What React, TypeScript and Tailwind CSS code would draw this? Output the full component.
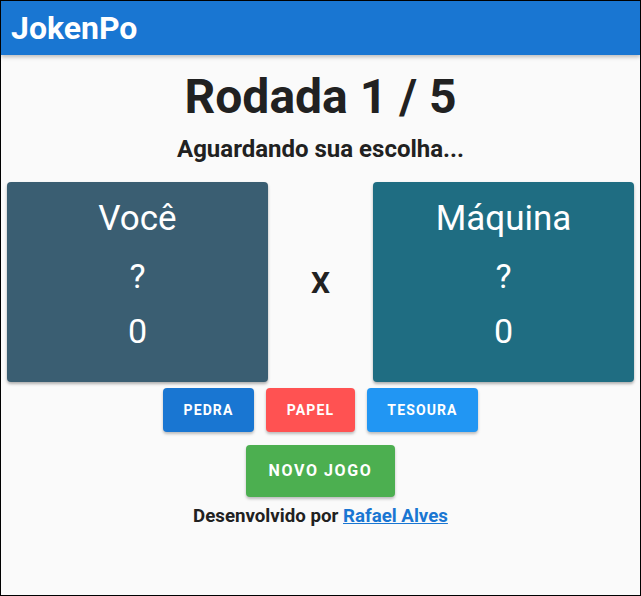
export default function App() {
  const font = { fontFamily: "Roboto, 'Liberation Sans', sans-serif" };
  return (
    <div
      className="w-[641px] h-[596px] border border-black bg-[#fafafa] overflow-hidden flex flex-col"
      style={font}
    >
      <header className="h-[54px] shrink-0 bg-[#1976d2] flex items-center px-[10px] shadow-[0_2px_4px_rgba(0,0,0,0.25)] relative z-10">
        <h1 className="text-white font-bold text-[32px] leading-none">JokenPo</h1>
      </header>
      <main className="flex flex-col items-center px-[6px]">
        <h2 className="mt-[14px] text-[48px] font-bold leading-[56px] text-[#212121]">Rodada 1 / 5</h2>
        <p className="mt-[9px] text-[24px] font-bold leading-[30px] text-[#212121]">Aguardando sua escolha...</p>
        <div className="mt-[18px] w-full flex items-center justify-between">
          <Card title="Você" color="bg-[#3a5e72]" />
          <span className="text-[30px] font-bold text-[#212121]">X</span>
          <Card title="Máquina" color="bg-[#1f6d82]" />
        </div>
        <div className="mt-[6px] flex gap-[12px]">
          <Btn label="PEDRA" className="w-[91px] bg-[#1976d2]" />
          <Btn label="PAPEL" className="w-[89px] bg-[#ff5252]" />
          <Btn label="TESOURA" className="w-[111px] bg-[#2196f3]" />
        </div>
        <button className="mt-[13px] w-[149px] h-[52px] rounded bg-[#4caf50] text-white font-bold text-[16px] tracking-[0.1em] shadow-[0_2px_3px_rgba(0,0,0,0.25)]">
          NOVO JOGO
        </button>
        <p className="mt-[8px] text-[18.7px] font-bold text-[#212121] leading-[22px]">
          Desenvolvido por <a href="#" className="text-[#1976d2] underline">Rafael Alves</a>
        </p>
      </main>
    </div>
  );
}

function Card({ title, color }: { title: string; color: string }) {
  return (
    <div className={`w-[261px] h-[200px] rounded-[4px] ${color} text-white flex flex-col items-center shadow-[0_2px_3px_rgba(0,0,0,0.3)]`}>
      <div className="mt-[15px] text-[35px] leading-[44px]">{title}</div>
      <div className="mt-[13px] text-[34px] leading-[44px]">?</div>
      <div className="mt-[11px] text-[34px] leading-[44px]">0</div>
    </div>
  );
}

function Btn({ label, className }: { label: string; className: string }) {
  return (
    <button className={`h-[44px] rounded text-white font-bold text-[14px] tracking-[0.08em] shadow-[0_2px_3px_rgba(0,0,0,0.25)] ${className}`}>
      {label}
    </button>
  );
}
